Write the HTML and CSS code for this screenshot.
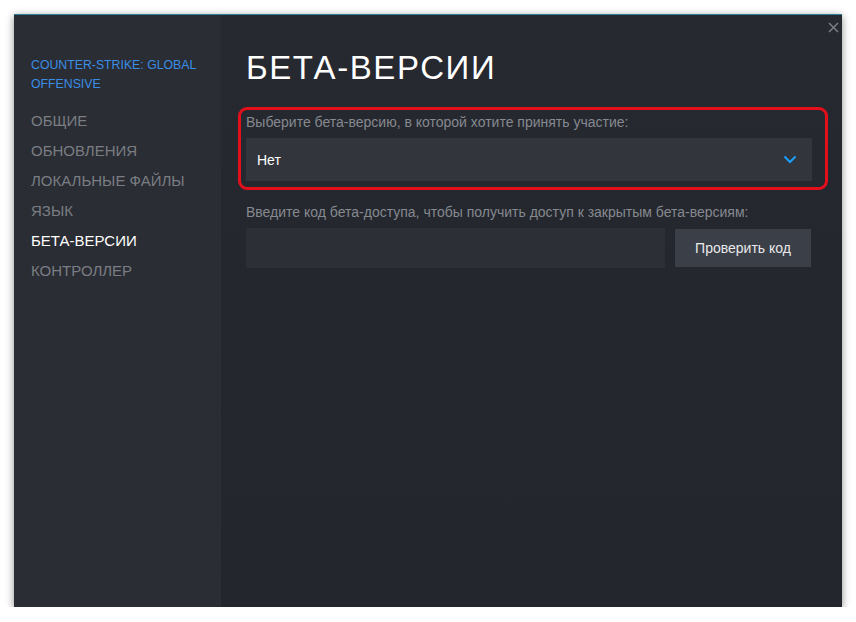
FILE: index.html
```html
<!DOCTYPE html>
<html lang="ru">
<head>
<meta charset="utf-8">
<title>Свойства — Бета-версии</title>
<link rel="stylesheet" href="styles.css">
</head>
<body>
<div class="window">
  <aside class="sidebar">
    <div class="game-title">COUNTER-STRIKE: GLOBAL OFFENSIVE</div>
    <nav class="nav">
      <div class="nav-item">ОБЩИЕ</div>
      <div class="nav-item">ОБНОВЛЕНИЯ</div>
      <div class="nav-item">ЛОКАЛЬНЫЕ ФАЙЛЫ</div>
      <div class="nav-item">ЯЗЫК</div>
      <div class="nav-item active">БЕТА-ВЕРСИИ</div>
      <div class="nav-item">КОНТРОЛЛЕР</div>
    </nav>
  </aside>
  <main class="content">
    <button class="close" aria-label="Закрыть">
      <svg width="11" height="11" viewBox="0 0 11 11"><path d="M1 1L10 10M10 1L1 10" stroke="#7b7e85" stroke-width="1.5" fill="none"/></svg>
    </button>
    <h1 class="heading">БЕТА-ВЕРСИИ</h1>
    <section class="beta-select">
      <div class="label">Выберите бета-версию, в которой хотите принять участие:</div>
      <div class="dropdown">
        <span>Нет</span>
        <svg width="14" height="9" viewBox="0 0 14 9"><path d="M1.5 1.5L7 7L12.5 1.5" stroke="#1a9fff" stroke-width="2" fill="none"/></svg>
      </div>
      <div class="highlight"></div>
    </section>
    <div class="label label2">Введите код бета-доступа, чтобы получить доступ к закрытым бета-версиям:</div>
    <div class="code-row">
      <div class="code-input"></div>
      <button class="check-btn">Проверить код</button>
    </div>
  </main>
</div>
</body>
</html>
```
FILE: styles.css
```css
html, body {
  margin: 0;
  padding: 0;
  background: #ffffff;
  font-family: "Liberation Sans", Arial, sans-serif;
}
body {
  padding: 14px 0 0 14px;
}
.window {
  width: 828px;
  height: 593px;
  display: flex;
  border-top: 1px solid #2b8096;
  box-sizing: border-box;
  box-shadow: 0 2px 8px rgba(0, 0, 0, 0.45);
  background: #24272e;
}
.sidebar {
  width: 207px;
  flex: none;
  background: #2a2d33;
  padding: 41px 17px 0 17px;
  box-sizing: border-box;
}
.game-title {
  color: #3a8ee6;
  font-size: 12.3px;
  line-height: 19px;
  text-transform: uppercase;
}
.nav {
  margin-top: 12px;
  display: flex;
  flex-direction: column;
}
.nav-item {
  color: #7a7d83;
  font-size: 15px;
  line-height: 30px;
}
.nav-item.active {
  color: #ffffff;
}
.content {
  flex: 1;
  position: relative;
  padding: 0 30px 0 25px;
  background: linear-gradient(180deg, #262930 0%, #24272d 40%, #23262d 100%);
}
.close {
  position: absolute;
  top: 7px;
  right: 3px;
  background: none;
  border: 0;
  padding: 0;
  width: 11px;
  height: 11px;
  display: flex;
}
.heading {
  margin: 33px 0 0 0;
  font-size: 33px;
  line-height: 40px;
  font-weight: normal;
  letter-spacing: 1.6px;
  color: #ffffff;
}
.beta-select {
  position: relative;
  margin-top: 26px;
}
.label {
  color: #868990;
  font-size: 14px;
  line-height: 17px;
}
.dropdown {
  margin-top: 7px;
  height: 43px;
  background: #32353c;
  display: flex;
  align-items: center;
  justify-content: space-between;
  padding: 0 15px 0 11px;
  color: #ffffff;
  font-size: 14px;
}
.highlight {
  position: absolute;
  left: -8px;
  top: -7px;
  right: -16px;
  bottom: -9px;
  border: 3px solid #e3101b;
  border-radius: 9px;
  pointer-events: none;
}
.label2 {
  margin-top: 23px;
}
.code-row {
  margin-top: 7px;
  display: flex;
  align-items: flex-start;
  gap: 10px;
}
.code-input {
  width: 419px;
  height: 40px;
  background: #2c2f36;
}
.check-btn {
  width: 136px;
  height: 38px;
  margin-top: 1px;
  background: #3b3f48;
  border: 0;
  color: #e8e9ea;
  font-family: "Liberation Sans", Arial, sans-serif;
  font-size: 14px;
}
```
